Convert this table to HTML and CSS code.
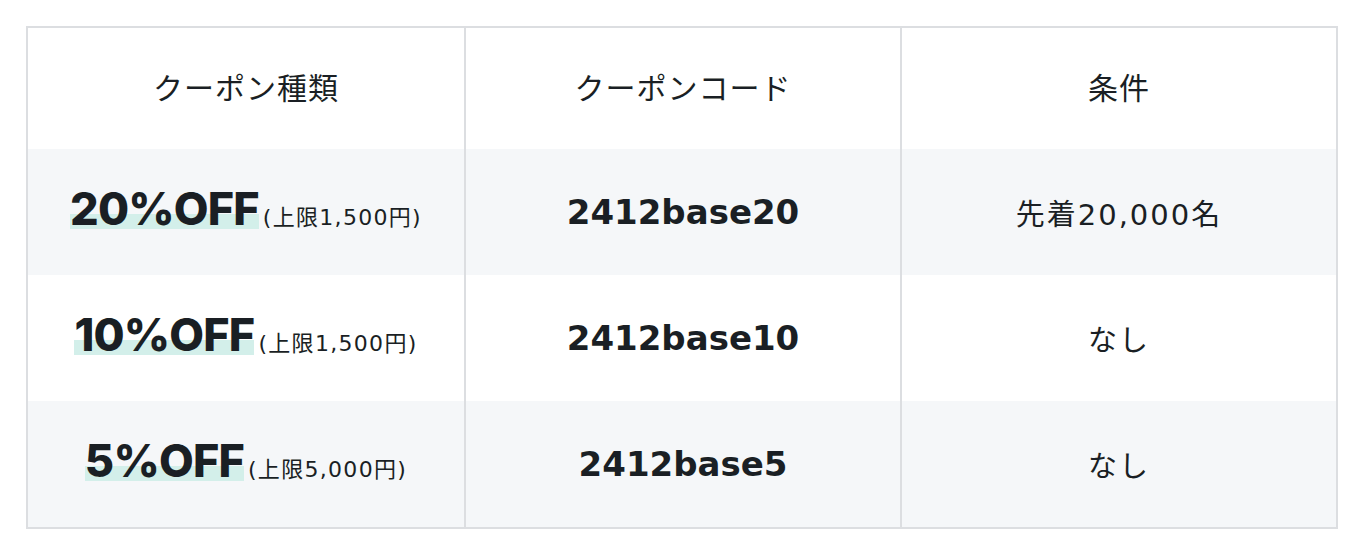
FILE: index.html
```html
<!DOCTYPE html>
<html lang="ja">
<head>
<meta charset="utf-8">
<link rel="stylesheet" href="styles.css">
</head>
<body>
<div class="wrap">
<table class="coupons">
  <thead>
    <tr>
      <th>クーポン種類</th>
      <th>クーポンコード</th>
      <th>条件</th>
    </tr>
  </thead>
  <tbody>
    <tr class="alt">
      <td class="type"><span class="off">20%OFF</span><span class="cap">(上限1,500円)</span></td>
      <td class="code">2412base20</td>
      <td class="cond">先着20,000名</td>
    </tr>
    <tr>
      <td class="type"><span class="off">10%OFF</span><span class="cap">(上限1,500円)</span></td>
      <td class="code">2412base10</td>
      <td class="cond">なし</td>
    </tr>
    <tr class="alt">
      <td class="type"><span class="off">5%OFF</span><span class="cap">(上限5,000円)</span></td>
      <td class="code">2412base5</td>
      <td class="cond">なし</td>
    </tr>
  </tbody>
</table>
</div>
</body>
</html>
```
FILE: styles.css
```css
html, body {
  margin: 0;
  padding: 0;
  background: #ffffff;
}
body {
  font-family: "Noto Sans CJK JP", sans-serif;
  color: #1a1f24;
}
.wrap {
  padding: 26px 28px 20px 26px;
}
.coupons {
  width: 1312px;
  table-layout: fixed;
  border-collapse: separate;
  border-spacing: 0;
  border: 2px solid #dcdee1;
}
.coupons th,
.coupons td {
  padding: 0;
  text-align: center;
  vertical-align: middle;
  border-left: 2px solid #dcdee1;
}
.coupons th:first-child,
.coupons td:first-child {
  border-left: 0;
}
.coupons th {
  height: 115px;
  padding-bottom: 6px;
  font-family: "Noto Sans CJK JP", sans-serif;
  font-weight: 400;
  font-size: 30px;
  letter-spacing: 1px;
}
.coupons td {
  height: 126px;
}
.coupons tr.alt td {
  background: #f5f7f9;
}
.coupons td.type {
  height: 118px;
  padding-bottom: 8px;
  white-space: nowrap;
}
.off {
  font-family: Inter, sans-serif;
  font-weight: 800;
  font-size: 45px;
  letter-spacing: -0.8px;
  background: linear-gradient(transparent 60%, #d3efea 60%, #d3efea 87%, transparent 87%);
}
.cap {
  font-family: "DejaVu Sans", "Noto Sans CJK JP", sans-serif;
  font-size: 22px;
  letter-spacing: 1.3px;
  margin-left: 4px;
}
.code {
  font-family: "DejaVu Sans", sans-serif;
  font-weight: 700;
  font-size: 34px;
}
.cond {
  font-family: "DejaVu Sans", "Noto Sans CJK JP", sans-serif;
  font-size: 29px;
  letter-spacing: 2px;
}
```
